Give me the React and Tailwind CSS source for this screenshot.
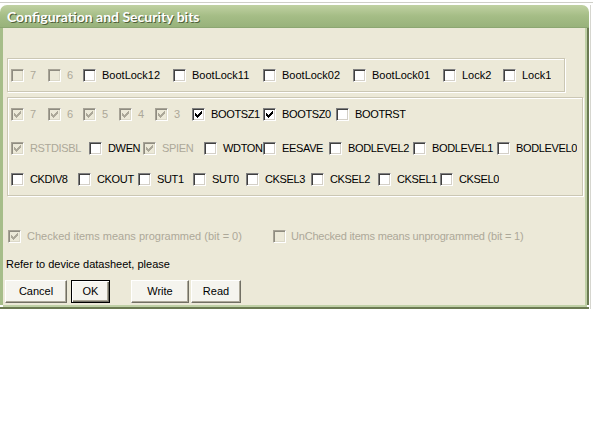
import React from "react";

function Box({ checked, disabled }) {
  const cls = disabled
    ? "relative inline-block w-[13px] h-[13px] shrink-0 border border-t-[#a7a396] border-l-[#a7a396] border-b-white border-r-white shadow-[inset_1px_1px_0_#8f8c80,inset_-1px_-1px_0_#dcd9c9] bg-[#ece9d8]"
    : "relative inline-block w-[13px] h-[13px] shrink-0 border border-t-[#808080] border-l-[#808080] border-b-white border-r-white shadow-[inset_1px_1px_0_#404040,inset_-1px_-1px_0_#d4d0c8] bg-white";
  return (
    <span className={cls}>
      {checked && (
        <svg
          className="absolute left-[-1px] top-[-1px]"
          width="13"
          height="13"
          viewBox="0 0 13 13"
          shapeRendering="crispEdges"
        >
          <path
            d="M3 5h1v3H3z M4 6h1v3H4z M5 7h1v3H5z M6 6h1v3H6z M7 5h1v3H7z M8 4h1v3H8z M9 3h1v3H9z"
            fill={disabled ? "#aca899" : "#000"}
          />
        </svg>
      )}
    </span>
  );
}

function Item({ w, label, checked, disabled }) {
  const upper = label === label.toUpperCase() && label.length > 1;
  const color = disabled ? "text-[#aca899]" : "text-black";
  const track = upper ? "tracking-[-0.35px]" : "tracking-normal";
  return (
    <div
      className="flex items-center shrink-0 overflow-hidden whitespace-nowrap h-[13px]"
      style={w ? { width: w } : undefined}
    >
      <Box checked={checked} disabled={disabled} />
      <span className={`ml-[6px] text-[11px] leading-[13px] ${color} ${track}`}>
        {label}
      </span>
    </div>
  );
}

function Row({ items }) {
  return (
    <div className="flex items-center">
      {items.map((it, i) => (
        <Item key={i} {...it} />
      ))}
    </div>
  );
}

const group1 = [
  { w: 37, label: "7", disabled: true },
  { w: 35, label: "6", disabled: true },
  { w: 90, label: "BootLock12" },
  { w: 90, label: "BootLock11" },
  { w: 90, label: "BootLock02" },
  { w: 90, label: "BootLock01" },
  { w: 60, label: "Lock2" },
  { label: "Lock1" },
];

const row1 = [
  { w: 37, label: "7", disabled: true, checked: true },
  { w: 35, label: "6", disabled: true, checked: true },
  { w: 36, label: "5", disabled: true, checked: true },
  { w: 36, label: "4", disabled: true, checked: true },
  { w: 37, label: "3", disabled: true, checked: true },
  { w: 71, label: "BOOTSZ1", checked: true },
  { w: 73, label: "BOOTSZ0", checked: true },
  { label: "BOOTRST" },
];

const row2 = [
  { w: 78, label: "RSTDISBL", disabled: true, checked: true },
  { w: 54, label: "DWEN" },
  { w: 61, label: "SPIEN", disabled: true, checked: true },
  { w: 59, label: "WDTON" },
  { w: 66, label: "EESAVE" },
  { w: 84, label: "BODLEVEL2" },
  { w: 84, label: "BODLEVEL1" },
  { label: "BODLEVEL0" },
];

const row3 = [
  { w: 67, label: "CKDIV8" },
  { w: 60, label: "CKOUT" },
  { w: 55, label: "SUT1" },
  { w: 53, label: "SUT0" },
  { w: 65, label: "CKSEL3" },
  { w: 67, label: "CKSEL2" },
  { w: 62, label: "CKSEL1" },
  { label: "CKSEL0" },
];

function Btn({ w, children, def }) {
  const cls = def
    ? "h-[23px] flex items-center justify-center bg-[#f5f4ee] border border-black shadow-[inset_1px_1px_0_#ffffff,inset_-1px_-1px_0_#716f64,inset_-2px_-2px_0_#aca899] text-[11px] text-black"
    : "h-[23px] flex items-center justify-center bg-[#f5f4ee] border border-t-white border-l-white border-b-[#716f64] border-r-[#716f64] shadow-[inset_-1px_-1px_0_#aca899] text-[11px] text-black";
  return (
    <div className={cls} style={{ width: w }}>
      {children}
    </div>
  );
}

export default function App() {
  return (
    <div
      className="w-[593px] h-[432px] bg-white overflow-hidden"
      style={{ fontFamily: '"Liberation Sans", Arial, sans-serif' }}
    >
      <div className="h-[5px] flex flex-col">
        <div className="h-[2px]" />
        <div className="h-[1px] bg-[#cfcfc8]" />
      </div>
      <div className="flex">
        <div className="w-[589px] flex flex-col">
          {/* title bar */}
          <div className="h-[23px] rounded-t-[7px] bg-gradient-to-b from-[#c0d1a2] via-[#a5bd86] to-[#98b27b] flex items-center pl-[7px] border-b border-[#8ca672]">
            <span
              className="text-white font-bold text-[14px] [text-shadow:1px_1px_0_#50603a]"
              style={{ fontFamily: "Lato, 'Open Sans', sans-serif" }}
            >
              Configuration and Security bits
            </span>
          </div>
          {/* body with frame */}
          <div className="flex">
            <div className="w-[3px] bg-[#a6bd89]" />
            <div className="w-[582px] h-[277px] bg-[#ece9d8] flex flex-col pl-[4px]">
              {/* group 1 */}
              <div className="mt-[30px] w-[558px] h-[34px] border border-[#cbc7b4] shadow-[1px_1px_0_#ffffff,inset_1px_1px_0_#ffffff] pl-[3px] pt-[10px]">
                <Row items={group1} />
              </div>
              {/* group 2 */}
              <div className="mt-[5px] w-[576px] h-[99px] border border-[#cbc7b4] shadow-[1px_1px_0_#ffffff,inset_1px_1px_0_#ffffff] pl-[3px] pt-[10px] flex flex-col">
                <Row items={row1} />
                <div className="mt-[21px]">
                  <Row items={row2} />
                </div>
                <div className="mt-[18px]">
                  <Row items={row3} />
                </div>
              </div>
              {/* legend */}
              <div className="mt-[34px] ml-[1px] flex items-center">
                <div className="w-[265px] flex items-center">
                  <Box checked disabled />
                  <span className="ml-[6px] text-[11px] leading-[13px] text-[#aca899]">
                    Checked items means programmed (bit = 0)
                  </span>
                </div>
                <div className="flex items-center">
                  <Box disabled />
                  <span className="ml-[5px] text-[11px] leading-[13px] text-[#aca899] tracking-[-0.2px]">
                    UnChecked items means unprogrammed (bit = 1)
                  </span>
                </div>
              </div>
              <div className="mt-[15px] -ml-[1px] text-[11px] leading-[13px] text-black">
                Refer to device datasheet, please
              </div>
              <div className="mt-[9px] -ml-[2px] flex">
                <Btn w={62}>Cancel</Btn>
                <div className="w-[4px]" />
                <Btn w={39} def>
                  OK
                </Btn>
                <div className="w-[21px]" />
                <Btn w={58}>Write</Btn>
                <div className="w-[2px]" />
                <Btn w={50}>Read</Btn>
              </div>
            </div>
            <div className="w-[2px] bg-[#bfd0a6]" />
            <div className="w-[2px] bg-[#6b7a52]" />
          </div>
          <div className="h-[2px] bg-[#bfd0a6] mr-[2px] ml-[3px]" />
          <div className="h-[2px] bg-[#6b7a52]" />
        </div>
        <div className="flex-1 flex">
          <div className="w-[1px]" />
          <div className="w-[1px] bg-[#d6d6cf]" />
        </div>
      </div>
    </div>
  );
}
